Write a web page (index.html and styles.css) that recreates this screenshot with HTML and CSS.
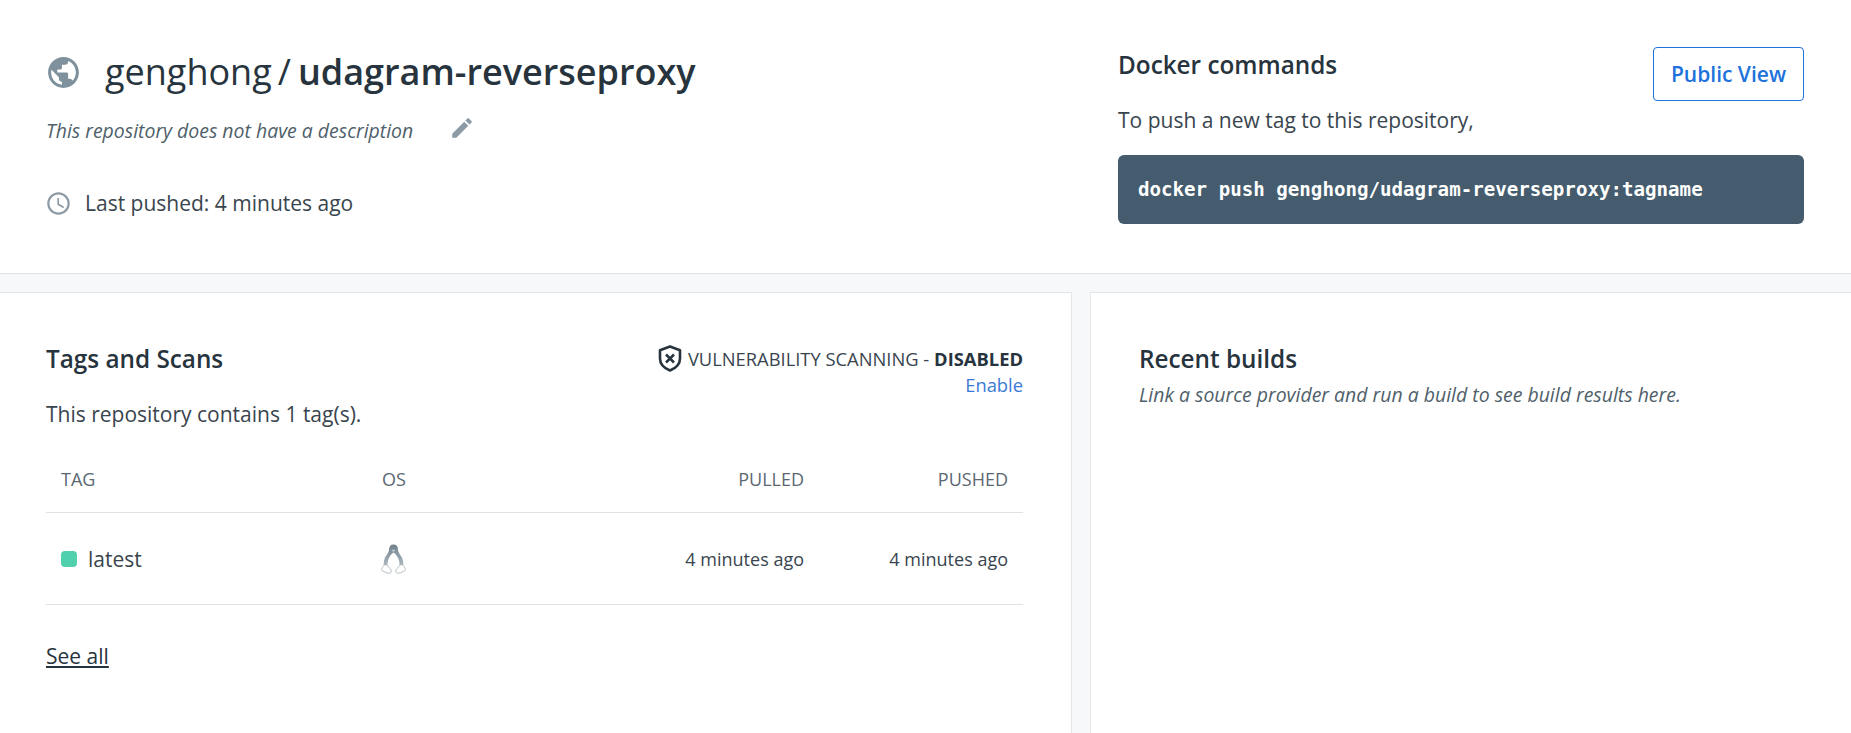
FILE: index.html
```html
<!DOCTYPE html>
<html lang="en">
<head>
<meta charset="utf-8">
<title>genghong/udagram-reverseproxy</title>
<link rel="stylesheet" href="styles.css">
</head>
<body>
<header class="repo-header">
  <div class="repo-info">
    <div class="repo-title">
      <svg class="globe" viewBox="0 0 24 24"><path d="M12 2C6.48 2 2 6.48 2 12s4.48 10 10 10 10-4.48 10-10S17.52 2 12 2zm-1 17.930c-3.950-.49-7-3.850-7-7.930 0-.62.08-1.210.21-1.790L9 15v1c0 1.100.9 2 2 2v1.930zm6.900-2.540c-.26-.81-1-1.390-1.900-1.390h-1v-3c0-.55-.45-1-1-1H8v-2h2c.55 0 1-.45 1-1V7h2c1.100 0 2-.9 2-2v-.41c2.930 1.190 5 4.060 5 7.410 0 2.080-.8 3.970-2.100 5.390z"/></svg>
      <h1 class="repo-name"><span class="ns">genghong</span><span class="slash">/</span><strong>udagram-reverseproxy</strong></h1>
    </div>
    <div class="repo-desc">
      <em>This repository does not have a description</em>
      <svg class="pencil" viewBox="0 0 24 24"><path d="M3 17.250V21h3.750L17.810 9.940l-3.750-3.750L3 17.250zM20.710 7.040a1 1 0 0 0 0-1.410l-2.340-2.340a1 1 0 0 0-1.410 0l-1.830 1.830 3.750 3.750 1.830-1.830z"/></svg>
    </div>
    <div class="repo-pushed">
      <svg class="clock" viewBox="0 0 24 24"><path d="M11.990 2C6.470 2 2 6.480 2 12s4.470 10 9.990 10C17.520 22 22 17.520 22 12S17.520 2 11.990 2zM12 20c-4.420 0-8-3.580-8-8s3.580-8 8-8 8 3.580 8 8-3.580 8-8 8zm.5-13H11v6l5.250 3.150.75-1.230-4.500-2.670V7z"/></svg>
      <span>Last pushed: 4 minutes ago</span>
    </div>
  </div>
  <div class="docker">
    <div class="docker-top">
      <div>
        <h2 class="docker-title">Docker commands</h2>
        <p class="docker-sub">To push a new tag to this repository,</p>
      </div>
      <a class="public-btn">Public View</a>
    </div>
    <div class="code">docker push genghong/udagram-reverseproxy:tagname</div>
  </div>
</header>
<main class="panels">
  <section class="panel tags">
    <div class="tags-head">
      <h2 class="panel-title">Tags and Scans</h2>
      <div class="scan">
        <div class="scan-line">
          <svg class="shield" viewBox="0 0 24 27"><path d="M12 1.500 22 5.200v8.300c0 5.700-4.500 9.800-10 12-5.500-2.200-10-6.300-10-12V5.200z" fill="none" stroke="#27343d" stroke-width="2.600" stroke-linejoin="round"/><path d="M8 9.500l8 8M16 9.500l-8 8" fill="none" stroke="#27343d" stroke-width="2.500"/></svg>
          <span>VULNERABILITY SCANNING - <b>DISABLED</b></span>
        </div>
        <a class="enable">Enable</a>
      </div>
    </div>
    <p class="tag-count">This repository contains 1 tag(s).</p>
    <div class="row head">
      <span class="c-tag">TAG</span><span class="c-os">OS</span><span class="c-pulled">PULLED</span><span class="c-pushed">PUSHED</span>
    </div>
    <div class="row body">
      <span class="c-tag latest"><i class="dot"></i>latest</span>
      <span class="c-os">
        <svg class="tux" viewBox="0 0 25 30">
          <defs><linearGradient id="tuxfill" x1="0" y1="0" x2="0" y2="1"><stop offset="0" stop-color="#6f808b"/><stop offset="1" stop-color="#b4bec5"/></linearGradient></defs>
          <path d="M12.500.5C9.500.5 8 2.500 8 5.500 8 9 5 11 3.500 15c-1 3-1 6-.5 9h19c.5-3 .5-6-.5-9C20 11 17 9 17 5.500c0-3-1.500-5-4.500-5z" fill="url(#tuxfill)"/>
          <path d="M12.500 8.500C10 10 6.500 15 6.500 20c0 3 .8 5 2 6h8c1.200-1 2-3 2-6 0-5-3.500-10-6-11.500z" fill="#fff"/>
          <path d="M10.300 5.800h4.400l-2.200 2.200z" fill="#c3cbd0"/>
          <path d="M2.800 21.500C2 23 .5 24 .5 25.500c0 1.600 2.700 2 5 3.300 2.300 1 4.800.3 4.800-1.600 0-2.200-2.300-3.500-3.800-5.400-1.100-1.400-2.900-1.600-3.700-.3zM22.200 21.500c.8 1.500 2.300 2.500 2.300 4 0 1.600-2.700 2-5 3.300-2.300 1-4.800.3-4.800-1.600 0-2.200 2.300-3.500 3.800-5.400 1.100-1.400 2.900-1.600 3.700-.3z" fill="#fff" stroke="#a3aeb5" stroke-width=".8"/>
        </svg>
      </span>
      <span class="c-pulled">4 minutes ago</span><span class="c-pushed">4 minutes ago</span>
    </div>
    <a class="see-all">See all</a>
  </section>
  <section class="panel builds">
    <h2 class="panel-title">Recent builds</h2>
    <p class="builds-sub">Link a source provider and run a build to see build results here.</p>
  </section>
</main>
</body>
</html>
```
FILE: styles.css
```css
* { box-sizing: border-box; }
html, body { margin: 0; height: 100%; }
body {
  background: #f7f8f9;
  color: #27343d;
  font-family: "Open Sans", sans-serif;
  font-size: 18px;
  overflow: hidden;
  display: flex;
  flex-direction: column;
}
h1, h2, p { margin: 0; }
.repo-header {
  flex: none;
  height: 274px;
  background: #fff;
  border-bottom: 1px solid #dfe3e6;
  display: flex;
  justify-content: space-between;
  padding: 47px 47px 0 46px;
}
.repo-title { display: flex; align-items: center; height: 50px; }
.globe { width: 37px; height: 37px; fill: #7e919c; margin-left: -1px; margin-right: 23px; }
.repo-name { font-size: 36px; font-weight: 400; line-height: 50px; white-space: nowrap; }
.repo-name strong { font-weight: 600; }
.slash { margin: 0 7px 0 6px; }
.repo-desc { display: flex; align-items: center; margin-top: 17px; height: 32px; color: #4f5f6a; font-size: 19.450px; }
.pencil { width: 26px; height: 26px; fill: #8b9aa4; margin-left: 36px; margin-top: -4px; }
.repo-pushed { display: flex; align-items: center; margin-top: 41px; height: 32px; font-size: 21px; color: #39454e; }
.clock { width: 27px; height: 27px; fill: #8b9aa4; margin-right: 13px; margin-left: -1px; }
.docker { width: 686px; }
.docker-top { display: flex; justify-content: space-between; }
.docker-title { font-size: 24.300px; font-weight: 600; line-height: 30px; margin-top: 3px; color: #27343d; }
.docker-sub { font-size: 21px; line-height: 30px; margin-top: 25px; color: #39454e; }
.public-btn {
  width: 151px; height: 54px;
  border: 1px solid #1d72dc; border-radius: 4px;
  color: #1d72dc; font-size: 21px; font-weight: 600;
  display: flex; align-items: center; justify-content: center;
}
.code {
  margin-top: 20px;
  height: 69px;
  background: #445c6e;
  border-radius: 6px;
  color: #fff;
  font-family: "DejaVu Sans Mono", monospace;
  font-size: 19.150px;
  font-weight: 600;
  display: flex; align-items: center;
  padding-left: 20px;
}
.panels {
  flex: 1;
  min-height: 0;
  display: grid;
  grid-template-columns: 1072px 1fr;
  gap: 18px;
  margin-top: 18px;
}
.panel { background: #fff; border: 1px solid #e4e7ea; border-bottom: 0; }
.tags { border-left: 0; padding: 51px 48px 0 46px; }
.builds { border-right: 0; padding: 51px 48px; }
.tags-head { display: flex; justify-content: space-between; align-items: flex-start; }
.panel-title { font-size: 24.300px; font-weight: 600; line-height: 30px; }
.scan { font-size: 18.350px; line-height: 25px; text-align: right; margin-top: 1px; }
.scan-line { display: flex; align-items: center; color: #39454e; }
.scan-line b { font-weight: 700; color: #27343d; }
.shield { width: 24px; height: 27px; margin-right: 6px; margin-left: -2px; }
.enable { color: #3a7bd5; }
.tag-count { font-size: 21px; line-height: 30px; margin-top: 2px; color: #39454e; }
.row { display: flex; align-items: center; border-bottom: 1px solid #dfe3e6; padding: 0 15px; }
.row.head { height: 84px; font-size: 18px; color: #5b6871; padding-top: 16px; }
.row.body { height: 92px; font-size: 18px; color: #39454e; }
.c-tag { width: 321px; }
.c-os { width: 180px; }
.c-pulled { width: 242px; text-align: right; }
.c-pushed { flex: 1; text-align: right; }
.latest { display: flex; align-items: center; font-size: 21px; }
.dot { width: 16px; height: 16px; background: #51d0ae; border-radius: 4px; margin-right: 11px; }
.tux { width: 25px; height: 30px; display: block; margin-left: -1px; }
.see-all { display: inline-block; margin-top: 36px; font-size: 21px; line-height: 30px; text-decoration: underline; color: #27343d; }
.builds-sub { font-size: 19.450px; line-height: 26px; font-style: italic; color: #4f5f6a; margin-top: 8px; }
```
